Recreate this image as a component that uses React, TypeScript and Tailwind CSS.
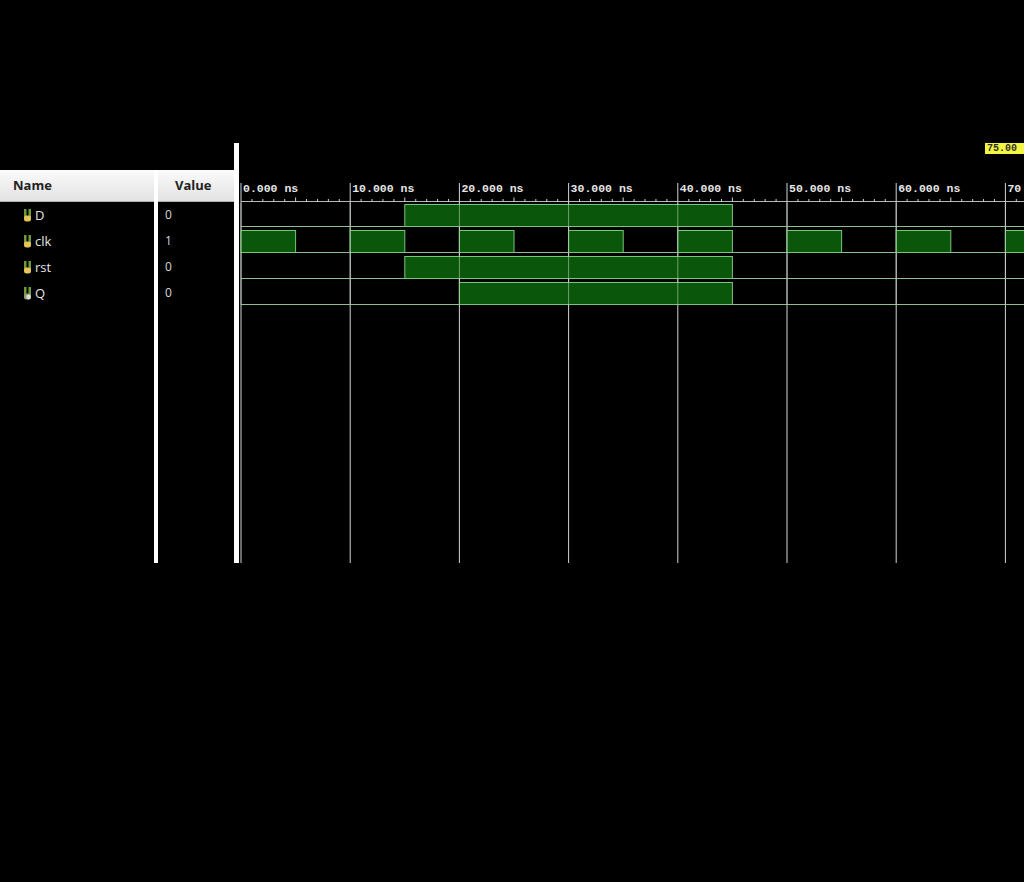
import React from "react";

const PX = 10.92; // pixels per ns
const X0 = 1; // svg x of 0 ns (svg starts at page x 240)
const SVG_TOP = 154; // page y of svg top
const W = 784;
const H = 563 - SVG_TOP;

const tx = (t: number) => X0 + t * PX;
const py = (y: number) => y - SVG_TOP;

type Sig = { name: string; value: string; highs: [number, number][]; out?: boolean };

const clkHighs: [number, number][] = [];
for (let t = 0; t < 80; t += 10) clkHighs.push([t, t + 5]);

const signals: Sig[] = [
  { name: "D", value: "0", highs: [[15, 45]] },
  { name: "clk", value: "1", highs: clkHighs },
  { name: "rst", value: "0", highs: [[15, 45]] },
  { name: "Q", value: "0", highs: [[20, 45]], out: true },
];

function SigIcon({ out }: { out?: boolean }) {
  return (
    <svg width="10" height="13" viewBox="0 0 10 13" className="shrink-0">
      <rect x="1" y="0" width="2.5" height="9" fill="#6f9a3a" />
      <rect x="5.5" y="0" width="2.5" height="9" fill="#6f9a3a" />
      {out ? (
        <>
          <rect x="1" y="6.5" width="7" height="6" rx="2" fill="#8f9c6a" />
          <circle cx="5.6" cy="10" r="2.4" fill="#dcdcdc" />
        </>
      ) : (
        <rect x="1" y="6.5" width="7" height="6" rx="2.5" fill="#e6c455" />
      )}
    </svg>
  );
}

function Waves() {
  const labels = [0, 10, 20, 30, 40, 50, 60, 70];
  const ticks: number[] = [];
  for (let t = 1; t < 72; t++) if (t % 10 !== 0) ticks.push(t);
  return (
    <svg width={W} height={H} viewBox={`0 0 ${W} ${H}`} className="block">
      {/* ruler */}
      {labels.map((t) => (
        <text
          key={"l" + t}
          x={tx(t) + 2}
          y={py(191.5)}
          fill="#e6e6e6"
          fontFamily="'Liberation Mono', 'DejaVu Sans Mono', monospace"
          fontWeight="bold"
          fontSize="11.5"
        >
          {t === 70 ? "70" : `${t}.000 ns`}
        </text>
      ))}
      <line x1={X0} x2={W} y1={py(201.5)} y2={py(201.5)} stroke="#b8b8b8" strokeWidth="1" />
      {ticks.map((t) => (
        <line
          key={"t" + t}
          x1={tx(t)}
          x2={tx(t)}
          y1={py(t % 5 === 0 ? 197.5 : 199)}
          y2={py(201.5)}
          stroke="#cfcfcf"
          strokeWidth="1"
        />
      ))}
      {/* grid */}
      {labels.map((t) => (
        <line
          key={"g" + t}
          x1={tx(t)}
          x2={tx(t)}
          y1={py(183)}
          y2={H}
          stroke="#d4d4d4"
          strokeWidth="1"
        />
      ))}
      {/* signals */}
      {signals.map((s, i) => {
        const top = py(204.5 + 26 * i);
        const bot = py(226.5 + 26 * i);
        return (
          <g key={s.name}>
            <line x1={X0} x2={W} y1={bot} y2={bot} stroke="#8fbf8f" strokeWidth="1" />
            {s.highs.map(([a, b], j) => (
              <rect
                key={j}
                x={tx(a)}
                y={top}
                width={Math.min(tx(b), W + 2) - tx(a)}
                height={bot - top}
                fill="#0a560a"
                stroke="#7cc47c"
                strokeWidth="1"
              />
            ))}
          </g>
        );
      })}
      {/* grid lines visible through the waveform boxes */}
      {labels.map((t) => (
        <line
          key={"go" + t}
          x1={tx(t)}
          x2={tx(t)}
          y1={py(203)}
          y2={py(305)}
          stroke="#c8d8c8"
          strokeOpacity="0.55"
          strokeWidth="1"
        />
      ))}
    </svg>
  );
}

export default function App() {
  const sans = { fontFamily: "'Open Sans', 'Noto Sans', sans-serif" };
  return (
    <div className="w-[1024px] h-[882px] bg-black overflow-hidden" style={sans}>
      <div className="pt-[143px] flex h-[563px]">
        {/* left table */}
        <div className="w-[234px] flex flex-col">
          <div className="h-[27px]" />
          <div className="flex flex-1">
            {/* name column */}
            <div className="w-[154px] flex flex-col">
              <div className="h-[32px] flex items-center pl-[13px] bg-gradient-to-b from-[#fbfbfb] to-[#e2e2e2] border-b border-[#b0b0b0]">
                <span className="text-[13px] font-bold text-[#222]">Name</span>
              </div>
              {signals.map((s) => (
                <div key={s.name} className="h-[26px] flex items-center pl-[23px] gap-[2px]">
                  <SigIcon out={s.out} />
                  <span className="text-[13px] text-[#e4e4e4] leading-none">{s.name}</span>
                </div>
              ))}
            </div>
            <div className="w-[4px] bg-white" />
            {/* value column */}
            <div className="w-[76px] flex flex-col">
              <div className="h-[32px] flex items-center pl-[17px] bg-gradient-to-b from-[#fbfbfb] to-[#e2e2e2] border-b border-[#b0b0b0]">
                <span className="text-[13px] font-bold text-[#222]">Value</span>
              </div>
              {signals.map((s) => (
                <div key={s.name} className="h-[26px] flex items-center pl-[7px]">
                  <span className="text-[12px] text-[#d8d8d8] leading-none">{s.value}</span>
                </div>
              ))}
            </div>
          </div>
        </div>
        <div className="w-[5px] bg-white" />
        <div className="w-[1px]" />
        {/* waveform */}
        <div className="w-[784px] flex flex-col">
          <div className="h-[11px] flex justify-end">
            <div className="h-[11px] bg-[#f4f442] pl-[2px] flex items-center w-[39px]">
              <span
                className="text-[10px] leading-none font-bold text-[#303030] whitespace-nowrap"
                style={{ fontFamily: "'Liberation Mono', monospace" }}
              >
                75.00
              </span>
            </div>
          </div>
          <Waves />
        </div>
      </div>
    </div>
  );
}
